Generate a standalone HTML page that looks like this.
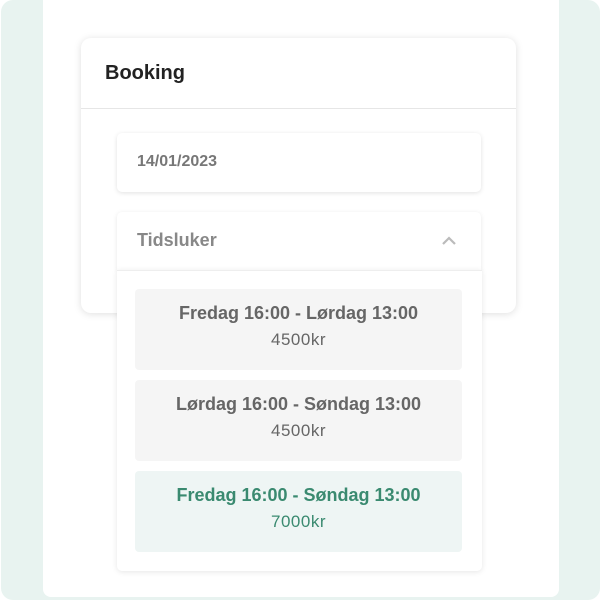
<!DOCTYPE html>
<html><head><style>
*{margin:0;padding:0;box-sizing:border-box}
body{width:601px;height:601px;background:#fff;position:relative;overflow:hidden;font-family:"Liberation Sans",sans-serif}
.bg{position:absolute;left:1px;top:0;width:599px;height:600px;background:#e8f3f0;border-radius:12px}
.panel{position:absolute;left:43px;top:0;width:516px;height:597px;background:#fff;border-radius:0 0 8px 8px}
.card{position:absolute;left:81px;top:38px;width:435px;height:275px;background:#fff;border-radius:10px;box-shadow:0 1px 8px rgba(0,0,0,.13)}
.card h1{position:absolute;left:24px;top:24px;font-size:20px;font-weight:bold;color:#222}
.div{position:absolute;left:0;right:0;top:70px;height:1px;background:#e6e6e6}
.inp{position:absolute;left:117px;top:133px;width:364px;height:59px;background:#fff;border-radius:5px;box-shadow:0 1px 5px rgba(0,0,0,.12)}
.inp span{position:absolute;left:20px;top:20px;font-size:16px;font-weight:bold;color:#777}
.dd{position:absolute;left:117px;top:212px;width:364px;height:58px;background:#fff;border-radius:5px 5px 0 0;box-shadow:0 1px 5px rgba(0,0,0,.1)}
.dd span{position:absolute;left:20px;top:18px;font-size:18px;font-weight:bold;color:#888}
.dd svg{position:absolute;left:324px;top:24px}
.list{position:absolute;left:117px;top:270px;width:365px;height:301px;background:#fff;border-radius:0 0 5px 5px;box-shadow:0 1px 6px rgba(0,0,0,.1);border-top:1px solid #eee}
.opt{position:absolute;left:18px;width:327px;height:81px;background:#f5f5f5;border-radius:4px;text-align:center;color:#666}
.opt b{display:block;font-size:18px;margin-top:14px}
.opt i{display:block;font-style:normal;font-size:17px;margin-top:6px;letter-spacing:.5px}
.sel{background:#eef5f4;color:#3a8a70}
</style></head><body>
<div class="bg"></div>
<div class="panel"></div>
<div class="card"><h1>Booking</h1><div class="div"></div></div>
<div class="inp"><span>14/01/2023</span></div>
<div class="dd"><span>Tidsluker</span><svg width="16" height="10" viewBox="0 0 16 10"><path d="M2 8L8 2L14 8" fill="none" stroke="#bbb" stroke-width="2.2"/></svg></div>
<div class="list">
<div class="opt" style="top:18px"><b>Fredag 16:00 - Lørdag 13:00</b><i>4500kr</i></div>
<div class="opt" style="top:109px"><b>Lørdag 16:00 - Søndag 13:00</b><i>4500kr</i></div>
<div class="opt sel" style="top:200px"><b>Fredag 16:00 - Søndag 13:00</b><i>7000kr</i></div>
</div>
</body></html>
